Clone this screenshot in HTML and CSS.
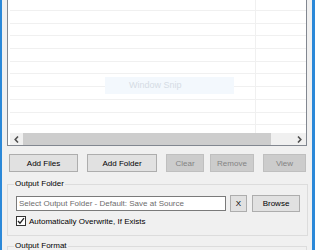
FILE: index.html
```html
<!DOCTYPE html>
<html lang="en">

<head>
    <meta charset="UTF-8">
    <meta name="viewport" content="width=device-width, initial-scale=1.0">
    <title>Batch Converter</title>
    <link rel="stylesheet" href="styles.css">
</head>

<body>

    <div class="window">

        <!-- file list -->
        <div class="file-list">
            <div class="rows">
                <div class="row row-first"><div class="cell-name"></div><div class="cell-info"></div></div>
                <div class="row"><div class="cell-name"></div><div class="cell-info"></div></div>
                <div class="row"><div class="cell-name"></div><div class="cell-info"></div></div>
                <div class="row"><div class="cell-name"></div><div class="cell-info"></div></div>
                <div class="row"><div class="cell-name"></div><div class="cell-info"></div></div>
                <div class="row"><div class="cell-name"></div><div class="cell-info"></div></div>
                <div class="row"><div class="cell-name"></div><div class="cell-info"></div></div>
                <div class="row"><div class="cell-name"></div><div class="cell-info"></div></div>
                <div class="row"><div class="cell-name"></div><div class="cell-info"></div></div>
                <div class="row"><div class="cell-name"></div><div class="cell-info"></div></div>
                <div class="row"><div class="cell-name"></div><div class="cell-info"></div></div>
            </div>

            <div class="watermark">Window Snip</div>

            <div class="hscroll">
                <div class="scroll-arrow">
                    <svg width="5" height="7" viewBox="0 0 5 7"><path d="M4 0.5 L1.2 3.5 L4 6.5" fill="none" stroke="#505050" stroke-width="1.6"/></svg>
                </div>
                <div class="scroll-thumb"></div>
                <div class="scroll-track"></div>
                <div class="scroll-arrow">
                    <svg width="5" height="7" viewBox="0 0 5 7"><path d="M1 0.5 L3.8 3.5 L1 6.5" fill="none" stroke="#505050" stroke-width="1.6"/></svg>
                </div>
            </div>
        </div>

        <!-- list buttons -->
        <div class="actions">
            <button class="btn btn-add-files">Add Files</button>
            <button class="btn btn-add-folder">Add Folder</button>
            <button class="btn btn-clear" disabled>Clear</button>
            <button class="btn btn-remove" disabled>Remove</button>
            <button class="btn btn-view" disabled>View</button>
        </div>

        <!-- output folder -->
        <fieldset class="group">
            <legend>Output Folder</legend>
            <div class="folder-row">
                <input type="text" class="folder-input" value="Select Output Folder - Default: Save at Source" readonly>
                <button class="btn btn-x">X</button>
                <button class="btn btn-browse">Browse</button>
            </div>
            <label class="check-row">
                <span class="checkbox">
                    <svg width="8" height="8" viewBox="0 0 8 8"><path d="M1 4 L3 6.2 L7 1.2" fill="none" stroke="#222" stroke-width="1.3"/></svg>
                </span>
                Automatically Overwrite, If Exists
            </label>
        </fieldset>

        <!-- output format -->
        <fieldset class="group group-format">
            <legend>Output Format</legend>
        </fieldset>

    </div>

</body>

</html>
```

FILE: styles.css
```css
* {
    box-sizing: border-box;
}

body {
    margin: 0;
    width: 315px;
    height: 250px;
    overflow: hidden;
    background-color: #f0f0f0;
    font-family: 'Liberation Sans', Arial, sans-serif;
    font-size: 8px;
    color: #000;
}

.window {
    display: flex;
    flex-direction: column;
    height: 250px;
    overflow: hidden;
    padding: 0 5px;
    border-left: 2px solid #2b88d8;
    border-right: 3px solid #2b88d8;
}

/* 文件列表 */
.file-list {
    position: relative;
    display: flex;
    flex-direction: column;
    height: 146px;
    flex-shrink: 0;
    background: #fff;
    border: 1px solid #828790;
    border-top: none;
}

.rows {
    flex: 1;
    overflow: hidden;
    margin-left: 2px;
}

.row {
    display: flex;
    height: 12.7px;
    border-bottom: 1px solid #f0f0f0;
}

.row-first {
    height: 11px;
}

.cell-name {
    width: 245px;
}

.cell-info {
    flex: 1;
    border-left: 1px solid #f0f0f0;
}

.watermark {
    position: absolute;
    left: 97px;
    top: 77px;
    width: 129px;
    height: 17px;
    padding-left: 24px;
    background: #f3f8fd;
    color: #d5dce4;
    font-size: 9px;
    line-height: 17px;
}

.hscroll {
    display: flex;
    height: 12px;
    margin-left: 2px;
    background: #f0f0f0;
}

.scroll-arrow {
    width: 13px;
    display: flex;
    align-items: center;
    justify-content: center;
}

.scroll-thumb {
    width: 248px;
    background: #cdcdcd;
}

.scroll-track {
    flex: 1;
}

/* 按钮 */
.actions {
    display: flex;
    margin-top: 8px;
    padding-left: 2px;
    height: 18px;
    flex-shrink: 0;
}

.btn {
    height: 18px;
    padding: 0;
    background: #e1e1e1;
    border: 1px solid #adadad;
    border-radius: 0;
    font-family: inherit;
    font-size: 8px;
    color: #000;
}

.btn:disabled {
    background: #cccccc;
    border-color: #bfbfbf;
    color: #838383;
}

.btn-add-files {
    width: 69px;
}

.btn-add-folder {
    width: 70px;
    margin-left: 9px;
}

.btn-clear {
    width: 38px;
    margin-left: 9px;
}

.btn-remove {
    width: 44px;
    margin-left: 6px;
}

.btn-view {
    width: 43px;
    margin-left: 9px;
}

/* 分组框 */
.group {
    margin: 7px 0 0;
    padding: 6px 7px 9px 8px;
    border: 1px solid #dcdcdc;
    flex-shrink: 0;
}

.group legend {
    padding: 0 1px;
    margin-left: -2px;
    line-height: 10px;
    font-size: 8px;
}

.group-format {
    margin-top: 5px;
    padding: 0;
    flex: 1 1 0;
    min-height: 0;
    border-bottom: none;
}

.group-format legend {
    margin-left: 6px;
}

.folder-row {
    display: flex;
    align-items: center;
    height: 17px;
}

.folder-input {
    width: 210px;
    height: 15px;
    padding: 0 2px;
    margin: 0;
    border: 1px solid #7a7a7a;
    background: #fff;
    font-family: inherit;
    font-size: 8px;
    color: #6d6d6d;
    outline: none;
}

.btn-x {
    width: 17px;
    height: 17px;
    margin-left: 4px;
}

.btn-browse {
    width: 48px;
    height: 17px;
    margin-left: 5px;
}

.check-row {
    display: flex;
    align-items: center;
    gap: 3px;
    margin-top: 4px;
    height: 10px;
}

.checkbox {
    width: 10px;
    height: 10px;
    border: 1px solid #333;
    background: #fff;
    display: flex;
    align-items: center;
    justify-content: center;
}
```
